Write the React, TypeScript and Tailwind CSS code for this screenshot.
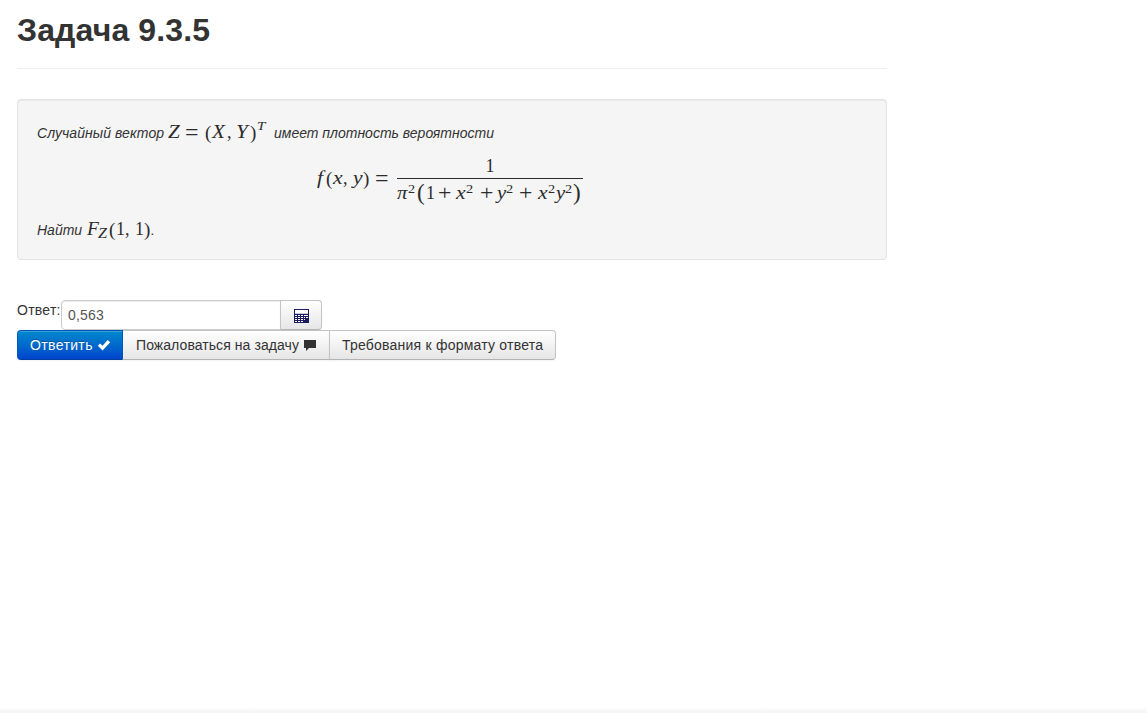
import type { ReactNode } from 'react';

/* One math glyph in a box of fixed advance width, set on the baseline. */
function G({ w, c = '', children }: { w: string; c?: string; children: ReactNode }) {
  return <span className={`inline-block origin-left whitespace-pre leading-[0] ${w} ${c}`}>{children}</span>;
}

function MathText({ children, c = '' }: { children: ReactNode; c?: string }) {
  return (
    <span className={`font-['Liberation_Serif',serif] text-[18px] not-italic leading-[0] whitespace-nowrap text-[#2b2b2b] tracking-normal ${c}`}>
      {children}
    </span>
  );
}

const button =
  'flex h-[30px] items-center border border-[#c4c4c4] border-b-[#b3b3b3] bg-linear-to-b from-white to-[#e6e6e6] text-[#333] shadow-[inset_0_1px_0_rgba(255,255,255,0.2),0_1px_2px_rgba(0,0,0,0.05)]';

function Check() {
  return (
    <svg width="14" height="14" viewBox="0 0 14 14" className="ml-1" aria-hidden="true">
      <path d="M.8 7.7 3.1 5.4 5.5 7.8 10.7 2 13.2 4.3 5.6 12.5Z" fill="white" />
    </svg>
  );
}

function Comment() {
  return (
    <svg width="14" height="14" viewBox="0 0 14 14" className="ml-1" aria-hidden="true">
      <path d="M1 2h12v8H6l-3 3v-3H1Z" fill="#333" />
    </svg>
  );
}

function Calculator() {
  return (
    <svg width="15" height="14" viewBox="0 0 15 14" className="mt-[2px] ml-px" shapeRendering="crispEdges" aria-hidden="true">
      <path d="M0 0h15v14H0Z" fill="#1b1b60" />
      <path
        d="M1 1h13v4H1ZM1 6h2v1H1ZM4 6h2v1H4ZM7 6h2v1H7ZM10 6h4v1h-4ZM1 8h2v1H1ZM4 8h2v1H4ZM7 8h2v1H7ZM10 8h1v1h-1ZM12 8h2v1h-2ZM1 10h2v1H1ZM4 10h2v1H4ZM7 10h2v1H7ZM10 10h1v1h-1ZM1 12h2v1H1ZM4 12h2v1H4ZM7 12h2v1H7Z"
        fill="#fff"
      />
      <path d="M1 4h13v1H1Z" fill="#c9c9e0" />
    </svg>
  );
}

export default function App() {
  return (
    <div className="flex h-[713px] flex-col overflow-hidden bg-white font-['Liberation_Sans',Arial,sans-serif] text-[14px] leading-5 text-[#333]">
      <main className="ml-[17px] w-[870px] grow">
        <h2 className="h-[69px] border-b border-[#eee] pt-[10px] text-[32px] leading-10 font-bold tracking-[0.13px]">Задача 9.3.5</h2>

        <section className="mt-[30px] h-[161px] rounded-[4px] border border-[#e3e3e3] bg-[#f5f5f5] px-[19px] pt-[19px] italic shadow-[inset_0_1px_1px_rgba(0,0,0,0.05)]">
          <div className="h-7 leading-7 whitespace-nowrap">
            <span className="inline-block w-[131px] tracking-[0.07px]">Случайный вектор</span>
            <MathText>
              <G w="w-[17px]" c="scale-x-[1.18] italic">Z</G>
              <G w="w-[20px]" c="align-[-2px] text-[24px]">=</G>
              <G w="w-[7px]" c="align-[-1px] text-[19px]">(</G>
              <G w="w-[15px]" c="scale-x-[1.18] italic">X</G>
              <G w="w-[9px]">,</G>
              <G w="w-[14px]" c="scale-x-[1.18] italic">Y</G>
              <G w="w-[7px]" c="align-[-1px] text-[19px]">)</G>
              <G w="w-[17px]" c="align-[8px] scale-x-[1.15] text-[13px] italic">T</G>
            </MathText>
            имеет плотность вероятности
          </div>

          <div className="flex h-[66px] pl-[280px]">
            <div className="w-[80px] leading-[64px]">
              <MathText>
                <G w="w-[9px]" c="scale-x-[1.2] italic">f</G>
                <G w="w-[7px]" c="align-[-1px] text-[19px]">(</G>
                <G w="w-[10px]" c="scale-x-[1.2] italic">x</G>
                <G w="w-[10px]">,</G>
                <G w="w-[10px]" c="scale-x-[1.2] italic">y</G>
                <G w="w-[12px]" c="align-[-1px] text-[19px]">)</G>
                <G w="w-[15px]" c="align-[-2px] text-[24px]">=</G>
              </MathText>
            </div>
            <div className="mt-[6px] w-[186px]">
              <div className="h-[26px] border-b border-[#2b2b2b] text-center leading-[28px]">
                <MathText>1</MathText>
              </div>
              <div className="h-[30px] pt-px leading-[29px]">
                <MathText>
                  <G w="w-[11px]" c="scale-x-[1.15] italic">π</G>
                  <G w="w-[9px]" c="align-[6px] scale-x-[1.1] text-[13px]">2</G>
                  <G w="w-[9px]" c="align-[-1px] text-[23px]">(</G>
                  <G w="w-[12px]">1</G>
                  <G w="w-[18px]" c="align-[-1px] scale-x-[1.08] text-[22px]">+</G>
                  <G w="w-[10px]" c="scale-x-[1.2] italic">x</G>
                  <G w="w-[14px]" c="align-[6px] scale-x-[1.1] text-[13px]">2</G>
                  <G w="w-[17px]" c="align-[-1px] scale-x-[1.08] text-[22px]">+</G>
                  <G w="w-[9px]" c="scale-x-[1.15] italic">y</G>
                  <G w="w-[13px]" c="align-[6px] scale-x-[1.1] text-[13px]">2</G>
                  <G w="w-[19px]" c="align-[-1px] scale-x-[1.08] text-[22px]">+</G>
                  <G w="w-[10px]" c="scale-x-[1.2] italic">x</G>
                  <G w="w-[8px]" c="align-[6px] scale-x-[1.1] text-[13px]">2</G>
                  <G w="w-[9px]" c="scale-x-[1.15] italic">y</G>
                  <G w="w-[8px]" c="align-[6px] scale-x-[1.1] text-[13px]">2</G>
                  <G w="w-[8px]" c="align-[-1px] text-[23px]">)</G>
                </MathText>
              </div>
            </div>
          </div>

          <div className="h-7 pt-[5px] leading-6 whitespace-nowrap">
            <span className="inline-block w-[50px]">Найти</span>
            <MathText>
              <G w="w-[11px]" c="scale-x-[1.08] italic">F</G>
              <G w="w-[11px]" c="align-[-3px] scale-x-[1.15] text-[14px] italic">Z</G>
              <G w="w-[7px]" c="align-[-1px] text-[19px]">(</G>
              <G w="w-[9px]">1</G>
              <G w="w-[10px]">,</G>
              <G w="w-[9px]">1</G>
              <G w="w-[7px]" c="align-[-1px] text-[19px]">)</G>
            </MathText>
            .
          </div>
        </section>

        <form className="mt-10" onSubmit={(e) => e.preventDefault()}>
          <div className="flex h-[30px]">
            <label htmlFor="answer" className="w-[44px] tracking-[0.25px] whitespace-nowrap">Ответ:</label>
            <input
              id="answer"
              defaultValue="0,563"
              className="h-[30px] w-[220px] rounded-l-[4px] border border-[#ccc] bg-white px-[6px] tracking-[0.2px] text-[#555] shadow-[inset_0_1px_1px_rgba(0,0,0,0.075)] outline-none"
            />
            <button type="button" aria-label="Калькулятор" className={`${button} -ml-px w-[42px] justify-center rounded-r-[4px]`}>
              <Calculator />
            </button>
          </div>
          <div className="flex h-[30px] whitespace-nowrap">
            <button
              type="submit"
              className="flex h-[30px] w-[106px] items-center rounded-l-[4px] border border-[#0058bd] border-b-[#003da0] bg-linear-to-b from-[#0088cc] to-[#0044cc] pl-3 tracking-[0.37px] text-white shadow-[inset_0_1px_0_rgba(255,255,255,0.2),0_1px_2px_rgba(0,0,0,0.05)] text-shadow-[0_-1px_0_rgba(0,0,0,0.25)]"
            >
              Ответить
              <Check />
            </button>
            <button type="button" className={`${button} w-[207px] border-l-0 pl-[13px] tracking-[0.07px]`}>
              Пожаловаться на задачу
              <Comment />
            </button>
            <button type="button" className={`${button} -ml-px w-[227px] rounded-r-[4px] pl-3 tracking-[0.22px]`}>
              Требования к формату ответа
            </button>
          </div>
        </form>
      </main>
      <div className="h-[5px] bg-linear-to-b from-[#fcfcfc] to-[#f4f4f4]" />
    </div>
  );
}
